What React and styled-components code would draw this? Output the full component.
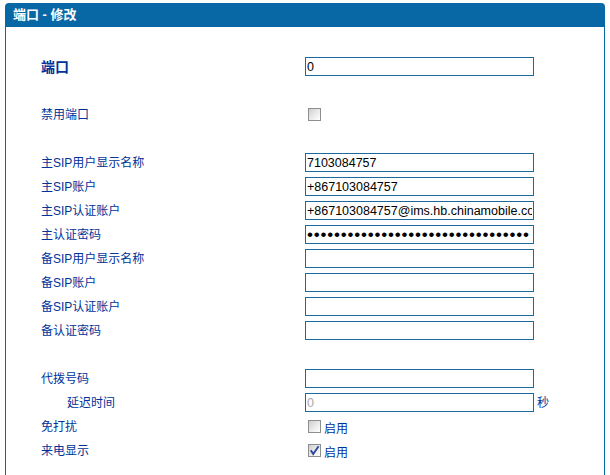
import React from "react";
import styled, { createGlobalStyle } from "styled-components";

const GlobalStyle = createGlobalStyle`
  html, body {
    margin: 0;
    padding: 0;
    background: #ffffff;
  }
  body {
    font-family: "Liberation Sans", "Noto Sans CJK SC", sans-serif;
  }
`;

const Panel = styled.div`
  width: 600px;
  margin: 3px 0 0 5px;
`;

const Header = styled.div`
  height: 24px;
  padding-left: 8px;
  background-color: #0868a6;
  border-radius: 4px 4px 0 0;
  color: #ffffff;
  font-size: 13px;
  font-weight: 700;
  line-height: 24px;
  font-family: "Liberation Sans", "Noto Sans CJK SC", sans-serif;
`;

const Body = styled.div`
  display: flex;
  flex-direction: column;
  gap: 5px;
  padding: 30px 0 24px 35px;
  border-left: 1px solid #0868a6;
  border-right: 1px solid #0868a6;
`;

const Row = styled.div`
  display: grid;
  grid-template-columns: 264px 1fr;
  grid-template-rows: 19px;
  align-items: center;
  height: 19px;
`;

const Spacer = styled.div`
  height: 19px;
`;

const Label = styled.div`
  padding-left: ${(p) => (p.$indent ? "26px" : "0px")};
  padding-top: 2px;
  color: #00339a;
  font-size: ${(p) => (p.$bold ? "14px" : "12px")};
  font-weight: ${(p) => (p.$bold ? 700 : 400)};
  line-height: 19px;
  white-space: nowrap;
`;

const Cell = styled.div`
  display: flex;
  align-items: center;
  height: 19px;
`;

const Field = styled.input`
  box-sizing: border-box;
  width: 229px;
  height: 19px;
  margin: 0;
  padding: 0 1px;
  border: 1px solid #1b6a9e;
  border-radius: 0;
  outline: none;
  background: #ffffff;
  color: ${(p) => (p.disabled ? "#a8a8a8" : "#000000")};
  font-size: 12.5px;
  font-family: "Liberation Sans", Arial, sans-serif;
`;

const Secret = styled(Field)`
  font-size: 17px;
  letter-spacing: 0.8px;
  padding-left: 1px;
`;

const Unit = styled.span`
  margin: 2px 0 0 3px;
  color: #00339a;
  font-size: 12px;
  line-height: 19px;
`;

const Box = styled.span`
  box-sizing: border-box;
  display: inline-flex;
  align-items: center;
  justify-content: center;
  width: 13px;
  height: 13px;
  margin-left: 3px;
  border: 1px solid #8e8e8e;
  background: linear-gradient(135deg, #cfcfcf 0%, #ececec 55%, #ffffff 100%);
`;

const BoxText = styled.span`
  margin: 5px 0 0 3px;
  color: #00339a;
  font-size: 12px;
  line-height: 14px;
`;

const Check = ({ checked, text }) => (
  <Cell>
    <Box>
      {checked && (
        <svg width="11" height="11" viewBox="0 0 11 11">
          <path
            d="M1.8 5.2 L4.2 9 L9.6 1.2"
            fill="none"
            stroke="#31479c"
            strokeWidth="1.9"
            strokeLinejoin="miter"
          />
        </svg>
      )}
    </Box>
    {text && <BoxText>{text}</BoxText>}
  </Cell>
);

const sipRows = [
  { label: "主SIP用户显示名称", value: "7103084757" },
  { label: "主SIP账户", value: "+867103084757" },
  { label: "主SIP认证账户", value: "+867103084757@ims.hb.chinamobile.com" },
  { label: "主认证密码", value: "123456789012345678901234567890123", secret: true },
  { label: "备SIP用户显示名称", value: "" },
  { label: "备SIP账户", value: "" },
  { label: "备SIP认证账户", value: "" },
  { label: "备认证密码", value: "" },
];

export default function App() {
  return (
    <>
      <GlobalStyle />
      <Panel>
        <Header>端口 - 修改</Header>
        <Body>
          <Row>
            <Label $bold>端口</Label>
            <Cell>
              <Field defaultValue="0" />
            </Cell>
          </Row>
          <Spacer />
          <Row>
            <Label>禁用端口</Label>
            <Check />
          </Row>
          <Spacer />
          {sipRows.map((r) => (
            <Row key={r.label}>
              <Label>{r.label}</Label>
              <Cell>
                {r.secret ? (
                  <Secret type="password" defaultValue={r.value} />
                ) : (
                  <Field defaultValue={r.value} />
                )}
              </Cell>
            </Row>
          ))}
          <Spacer />
          <Row>
            <Label>代拨号码</Label>
            <Cell>
              <Field defaultValue="" />
            </Cell>
          </Row>
          <Row>
            <Label $indent>延迟时间</Label>
            <Cell>
              <Field defaultValue="0" disabled />
              <Unit>秒</Unit>
            </Cell>
          </Row>
          <Row>
            <Label>免打扰</Label>
            <Check text="启用" />
          </Row>
          <Row>
            <Label>来电显示</Label>
            <Check checked text="启用" />
          </Row>
        </Body>
      </Panel>
    </>
  );
}
